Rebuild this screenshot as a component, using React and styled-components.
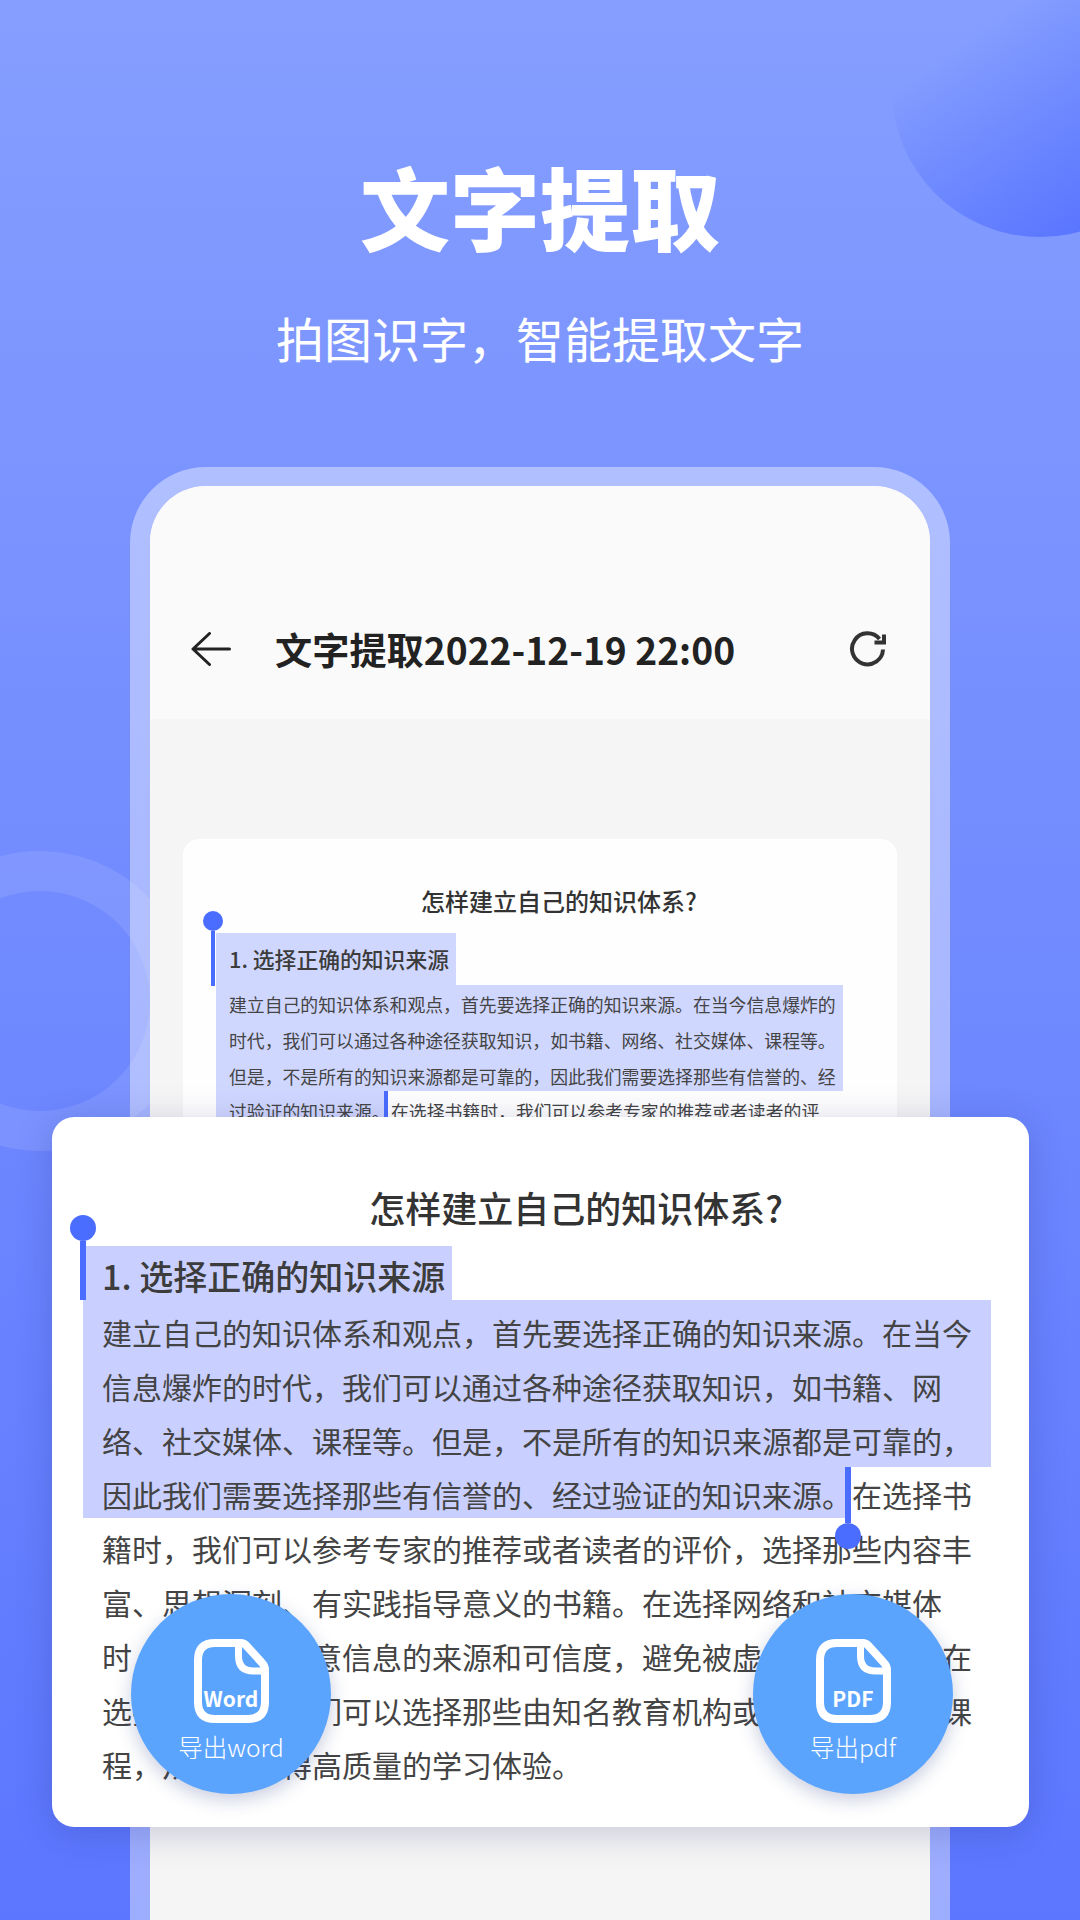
import React from 'react';
import styled, { createGlobalStyle } from 'styled-components';

const GlobalStyle = createGlobalStyle`
  html, body {
    margin: 0;
    padding: 0;
  }
  body {
    font-family: "Noto Sans CJK SC", "Noto Sans", sans-serif;
  }
`;

const Page = styled.div`
  position: relative;
  width: 1080px;
  height: 1920px;
  overflow: hidden;
  display: flex;
  flex-direction: column;
  align-items: center;
  background: linear-gradient(180deg, #859eff 0%, #5c76ff 100%);
`;

const CornerBlob = styled.div`
  position: absolute;
  left: 892px;
  top: -59px;
  width: 296px;
  height: 296px;
  border-radius: 50%;
  background: linear-gradient(145deg, rgba(95, 120, 255, 0) 30%, #5975ff 85%);
`;

const SideRing = styled.div`
  position: absolute;
  left: -110px;
  top: 851px;
  width: 300px;
  height: 300px;
  box-sizing: border-box;
  border-radius: 50%;
  border: 40px solid rgba(255, 255, 255, 0.1);
`;

const Heading = styled.h1`
  position: relative;
  margin: 155px 0 0;
  font-size: 90px;
  line-height: 100px;
  font-weight: 900;
  color: #fff;
`;

const Subheading = styled.p`
  position: relative;
  margin: 52px 0 0;
  font-size: 48px;
  line-height: 60px;
  font-weight: 400;
  color: #fff;
`;

const Phone = styled.div`
  position: relative;
  flex: 1;
  box-sizing: border-box;
  width: 820px;
  margin-top: 100px;
  border: 20px solid rgba(255, 255, 255, 0.4);
  border-top-width: 19px;
  border-bottom: 0;
  border-radius: 76px 76px 0 0;
  background-clip: padding-box;
`;

const Screen = styled.div`
  height: 100%;
  border-radius: 56px 56px 0 0;
  overflow: hidden;
  background: #f5f5f5;
`;

const NavBar = styled.div`
  height: 233px;
  box-sizing: border-box;
  padding: 93px 44px 0 41px;
  display: flex;
  align-items: center;
  background: #fafafa;
`;

const NavTitle = styled.div`
  flex: 1;
  margin-left: 44px;
  font-size: 37.2px;
  font-weight: 700;
  color: #222;
  white-space: nowrap;
`;

const Doc = styled.div`
  position: relative;
  height: 840px;
  margin: 120px 33px 0;
  padding: 44px 0 0 33px;
  box-sizing: border-box;
  border-radius: 16px;
  background: #fefefe;
  color: #444;
`;

const DocTitle = styled.div`
  font-size: ${p => p.$size}px;
  line-height: ${p => p.$lineHeight}px;
  font-weight: 500;
  color: #333;
  text-align: center;
  padding-left: ${p => p.$indent}px;
  white-space: nowrap;
`;

const SectionMark = styled.div`
  width: fit-content;
  box-sizing: border-box;
  margin-top: ${p => p.$gap}px;
  padding: 0 7px 0 ${p => p.$pad}px;
  font-size: ${p => p.$size}px;
  line-height: ${p => p.$textLine}px;
  height: ${p => p.$height}px;
  font-weight: 500;
  color: #3c3c3c;
  background: ${p => p.$color};
  white-space: nowrap;
`;

const Selected = styled.div`
  height: ${p => p.$height}px;
  box-sizing: border-box;
  width: ${p => p.$width};
  background: ${p => p.$color};
  padding-top: ${p => p.$top}px;
`;

const Line = styled.div`
  display: flex;
  height: ${p => p.$height}px;
  padding-left: ${p => p.$pad || 0}px;
  font-size: ${p => p.$size}px;
  line-height: ${p => p.$height}px;
  white-space: nowrap;
`;

const LineMark = styled.span`
  display: block;
  box-sizing: border-box;
  width: ${p => p.$width}px;
  height: ${p => p.$fill}px;
  padding-left: ${p => p.$pad}px;
  background: ${p => p.$color};
`;

const MarkGap = styled.span`
  display: block;
  width: ${p => p.$width}px;
`;

const Pin = styled.div`
  position: absolute;
  left: ${p => p.$left}px;
  top: ${p => p.$top}px;
  width: ${p => p.$knob}px;
  display: flex;
  flex-direction: ${p => (p.$flip ? 'column-reverse' : 'column')};
  align-items: center;
`;

const Knob = styled.div`
  width: ${p => p.$knob}px;
  height: ${p => p.$knob}px;
  border-radius: 50%;
  background: #4a6cff;
`;

const Stem = styled.div`
  width: ${p => p.$width}px;
  height: ${p => p.$height}px;
  background: #4a6cff;
`;

const Card = styled.div`
  position: absolute;
  left: 52px;
  top: 1117px;
  width: 977px;
  height: 710px;
  box-sizing: border-box;
  padding: 63px 38px 0 31px;
  border-radius: 22px;
  background: #fff;
  color: #444;
  box-shadow: 0 6px 36px rgba(30, 40, 110, 0.22);
`;

const FabRound = styled.div`
  position: absolute;
  left: ${p => p.$left}px;
  top: 1594px;
  width: 200px;
  height: 200px;
  border-radius: 50%;
  display: flex;
  flex-direction: column;
  align-items: center;
  padding-top: 45px;
  box-sizing: border-box;
  background: #5ba4fe;
  color: #fff;
  box-shadow: 0 6px 18px rgba(40, 60, 130, 0.25);
`;

const FileBadge = styled.div`
  position: relative;
  width: 75px;
  height: 84px;
`;

const FileLabel = styled.span`
  position: absolute;
  left: 0;
  right: 0;
  top: 44px;
  text-align: center;
  font-size: 21px;
  line-height: 30px;
  font-weight: 700;
`;

const FabLabel = styled.div`
  margin-top: 7px;
  font-size: 24.5px;
  line-height: 34px;
  font-weight: 300;
  white-space: nowrap;
`;

const BackIcon = () => (
  <svg width="40" height="34" viewBox="0 0 40 34" fill="none" stroke="#222" strokeWidth="3" strokeLinecap="round" strokeLinejoin="round">
    <path d="M38.5 17H2M18.5 1.500 2 17l16.500 15.500" />
  </svg>
);

const RefreshIcon = () => (
  <svg width="37" height="36" viewBox="0 0 37 36" fill="none" stroke="#333" strokeWidth="4">
    <path d="M34 18.500A15.500 15.500 0 1 1 30.500 8" />
    <path d="M25.500 11.500H35V3.500" />
  </svg>
);

const FileIcon = () => (
  <svg width="75" height="84" viewBox="0 0 75 84" fill="none" stroke="#fff" strokeLinejoin="round">
    <path strokeWidth="8" d="M21 4h26q3 0 5 2.200l15.500 17q3.500 3.600 3.500 7.300v32.500q0 17-17 17H21q-17 0-17-17V21Q4 4 21 4Z" />
    <path strokeWidth="7" d="M44.500 5v12q0 15 15 15h12" />
  </svg>
);

const smallLines = [
  '建立自己的知识体系和观点\uFF0C首先要选择正确的知识来源。在当今信息爆炸的',
  '时代\uFF0C我们可以通过各种途径获取知识\uFF0C如书籍、网络、社交媒体、课程等。',
  '但是\uFF0C不是所有的知识来源都是可靠的\uFF0C因此我们需要选择那些有信誉的、经',
];

const bigLines = [
  '建立自己的知识体系和观点\uFF0C首先要选择正确的知识来源。在当今',
  '信息爆炸的时代\uFF0C我们可以通过各种途径获取知识\uFF0C如书籍、网',
  '络、社交媒体、课程等。但是\uFF0C不是所有的知识来源都是可靠的\uFF0C',
];

const bigRest = [
  '籍时\uFF0C我们可以参考专家的推荐或者读者的评价\uFF0C选择那些内容丰',
  '富、思想深刻、有实践指导意义的书籍。在选择网络和社交媒体',
  '时\uFF0C我们需要注意信息的来源和可信度\uFF0C避免被虚假信息误导。在',
  '选择课程时\uFF0C我们可以选择那些由知名教育机构或专家开设的优课',
  '程\uFF0C从而能获得高质量的学习体验。',
];

const App = () => (
  <Page>
    <GlobalStyle />
    <CornerBlob />
    <SideRing />
    <Heading>文字提取</Heading>
    <Subheading>{'拍图识字\uFF0C智能提取文字'}</Subheading>
    <Phone>
      <Screen>
        <NavBar>
          <BackIcon />
          <NavTitle>文字提取2022-12-19 22:00</NavTitle>
          <RefreshIcon />
        </NavBar>
        <Doc>
          <Pin $left={20} $top={72} $knob={20}>
            <Knob $knob={20} />
            <Stem $width={4} $height={55} />
          </Pin>
          <DocTitle $size={24} $lineHeight={36} $indent={5}>怎样建立自己的知识体系?</DocTitle>
          <SectionMark $gap={14} $pad={13} $size={21.8} $height={52} $textLine={52} $color="#d0d7ff">1. 选择正确的知识来源</SectionMark>
          <Selected $color="#d0d7ff" $top={1} $height={106} $width="627px">
            {smallLines.map(text => (
              <Line key={text} $height={36} $size={17.85} $pad={13}>{text}</Line>
            ))}
          </Selected>
          <Line $height={40} $size={17.85}>
            <LineMark $fill={40} $pad={13} $width={168} $color="#d0d7ff">过验证的知识来源。</LineMark>
            <MarkGap $width={7}>
              <Stem $width={4} $height={40} />
            </MarkGap>
            <span>{'在选择书籍时\uFF0C我们可以参考专家的推荐或者读者的评'}</span>
          </Line>
        </Doc>
      </Screen>
    </Phone>
    <Card>
      <Pin $left={18} $top={98} $knob={26}>
        <Knob $knob={26} />
        <Stem $width={6} $height={59} />
      </Pin>
      <DocTitle $size={36} $lineHeight={54} $indent={78}>怎样建立自己的知识体系?</DocTitle>
      <SectionMark $gap={12} $pad={19} $size={34} $height={54} $textLine={60} $color="#c9d0ff">1. 选择正确的知识来源</SectionMark>
      <Selected $color="#c9d0ff" $top={5} $height={167} $width="100%">
        {bigLines.map(text => (
          <Line key={text} $height={54} $size={30} $pad={19}>{text}</Line>
        ))}
      </Selected>
      <Line $height={54} $size={30}>
        <LineMark $fill={51} $pad={19} $width={762} $color="#c9d0ff">因此我们需要选择那些有信誉的、经过验证的知识来源。</LineMark>
        <MarkGap $width={7} />
        <span>在选择书</span>
      </Line>
      {bigRest.map(text => (
        <Line key={text} $height={54} $size={30} $pad={19}>{text}</Line>
      ))}
      <Pin $left={783} $top={350} $knob={26} $flip>
        <Knob $knob={26} />
        <Stem $width={6} $height={56} />
      </Pin>
    </Card>
    <FabRound $left={131}>
      <FileBadge>
        <FileIcon />
        <FileLabel>Word</FileLabel>
      </FileBadge>
      <FabLabel>导出word</FabLabel>
    </FabRound>
    <FabRound $left={753}>
      <FileBadge>
        <FileIcon />
        <FileLabel>PDF</FileLabel>
      </FileBadge>
      <FabLabel>导出pdf</FabLabel>
    </FabRound>
  </Page>
);

export default App;
